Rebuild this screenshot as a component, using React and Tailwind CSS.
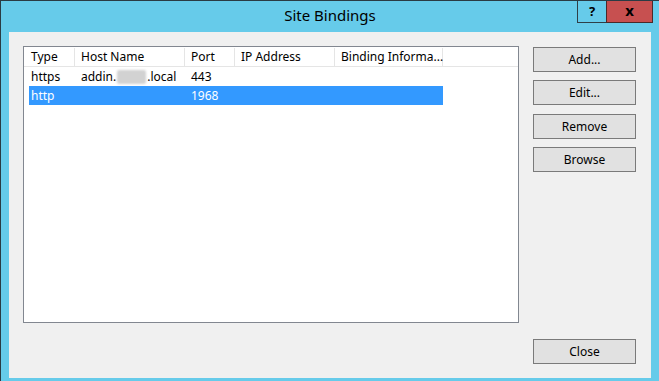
import React from "react";

const columns = [
  { label: "Type", width: "w-[51px]" },
  { label: "Host Name", width: "w-[110px]" },
  { label: "Port", width: "w-[50px]" },
  { label: "IP Address", width: "w-[100px]" },
  { label: "Binding Informa...", width: "w-[108px]" },
];

const bindings = [
  { type: "https", host: "addin.", hostTail: ".local", port: "443", selected: false },
  { type: "http", host: "", hostTail: "", port: "1968", selected: true },
];

const buttons = ["Add...", "Edit...", "Remove", "Browse"];

const DialogButton = ({ children, className = "" }) => (
  <button
    className={`h-[25px] w-[103px] border border-[#7a7a7a] bg-[#e1e1e1] text-[12px] text-black leading-none ${className}`}
  >
    {children}
  </button>
);

const App = () => {
  return (
    <div className="relative flex h-[381px] w-[659px] flex-col overflow-hidden border-l border-t border-[#2a3b44] bg-[#66cbea] font-['Noto_Sans','DejaVu_Sans',sans-serif] text-black">
      {/* Title bar */}
      <div className="flex h-[31px] shrink-0 items-center justify-center pb-[2px] text-[15px]">
        Site Bindings
      </div>

      {/* Caption buttons */}
      <div className="absolute right-[6px] top-[-1px] flex">
        <div className="flex h-[23px] w-[29px] items-center justify-center border border-r-0 border-[#2f3f47] text-[13px] font-bold">
          ?
        </div>
        <div className="flex h-[23px] w-[47px] items-center justify-center border border-[#4a2a2a] bg-[#c75050] pb-[2px] text-[15px] font-bold">
          x
        </div>
      </div>

      {/* Client area */}
      <div className="ml-[8px] mr-[8px] flex h-[346px] w-[642px] bg-[#f0f0f0] pl-[14px] pr-[15px] pt-[14px]">
        <div className="flex h-[277px] w-[496px] flex-col border border-[#828790] bg-white text-[12px]">
          {/* Header */}
          <div className="flex h-[20px] border-b border-[#e5e5e5] pt-px">
            {columns.map((col, i) => (
              <div
                key={col.label}
                className={`flex items-center border-r border-[#e5e5e5] ${col.width} ${
                  i === 0 ? "pl-[7px]" : "pl-[6px]"
                } whitespace-nowrap`}
              >
                {col.label}
              </div>
            ))}
          </div>

          {/* Rows */}
          {bindings.map((row) => (
            <div key={row.type} className="flex h-[19px] pl-[5px]">
              <div
                className={`flex w-[414px] items-center pt-px ${
                  row.selected ? "bg-[#3399ff] text-white" : ""
                }`}
              >
                <div className="w-[46px] pl-[2px]">{row.type}</div>
                <div className="flex w-[110px] items-center pl-[6px]">
                  {row.host}
                  {row.host && (
                    <span className="mx-[1px] inline-block h-[14px] w-[29px] rounded-[2px] bg-[#d2d2d2] blur-[1px]" />
                  )}
                  {row.hostTail}
                </div>
                <div className="w-[50px] pl-[6px]">{row.port}</div>
              </div>
            </div>
          ))}
        </div>

        <div className="ml-[14px] flex h-[318px] flex-col pt-px">
          {buttons.map((label, i) => (
            <DialogButton key={label} className={i === 0 ? "" : i === 2 ? "mt-[9px]" : "mt-[8px]"}>
              {label}
            </DialogButton>
          ))}
          <DialogButton className="mt-auto">Close</DialogButton>
        </div>
      </div>
    </div>
  );
};

export default App;
